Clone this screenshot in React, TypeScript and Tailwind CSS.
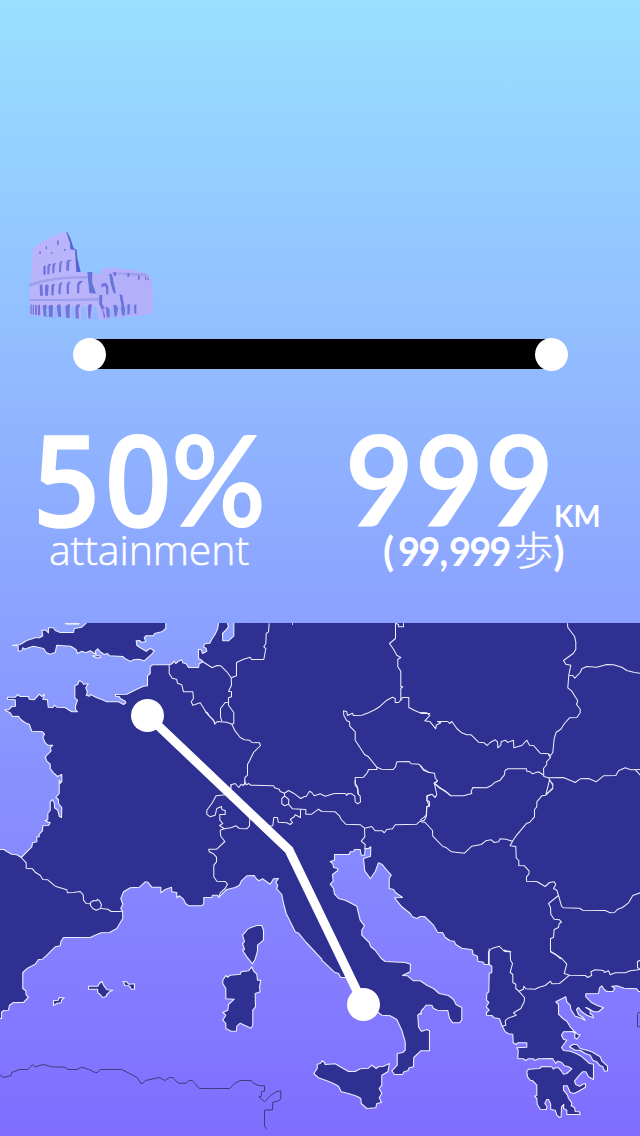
import React from "react";

type Tile = "A" | "B" | "C" | "D" | "E" | "F" | "G" | "H" | "I";
type Segment = [Tile, string];

// The map is stored as nine survey tiles, three units to the pixel.
const origins: Record<Tile, [number, number]> = {
  A: [0, 615], B: [205, 615], C: [420, 615],
  D: [0, 780], E: [205, 780], F: [420, 780],
  G: [0, 950], H: [205, 950], I: [420, 950],
};

const toPath = (segments: Segment[], closed = false) =>
  "M" +
  segments
    .flatMap(([tile, pts]) =>
      pts.trim().split(/\s+/).map((p) => {
        const [x, y] = p.split(",").map(Number);
        const [ox, oy] = origins[tile];
        return `${(ox + (x + 0.5) / 3).toFixed(1)} ${(oy + (y + 0.5) / 3).toFixed(1)}`;
      })
    )
    .join("L") +
  (closed ? "Z" : "");

const mainland: Segment[] = [
  ["B", "40,10 40,24 37,42 28,60 20,72 14,84 0,86"],
  ["A", "613,86 610,95 618,100 620,108 607,115 603,103 595,103 595,130 605,135 608,140 597,146 595,157 565,157 558,146 548,143 545,134 535,138 527,145 522,138 517,145 508,149 457,149 450,155 450,175 442,182 442,212 430,213 410,222 380,237 345,238 347,243 358,245 360,250 375,258 377,263 370,268 355,260 320,260 305,253 290,248 272,238 268,243 258,240 262,232 257,218 264,206 250,207 245,200 237,197 233,207 224,212 224,248 232,255 226,272 226,283 232,290 215,290 205,284 195,277 170,276 163,270 158,277 144,276 142,254 128,252 133,237 125,244 118,237 105,250 102,254 87,252 85,244 60,244 53,238 45,246 22,246 22,252 45,254 46,273 35,274 25,284 14,284 20,288 30,293 37,304 55,303 62,313 75,323 87,327 95,348 127,350 133,357 128,367 135,383 143,390 158,390 150,398 153,407 135,425 140,438 150,447 150,460 160,473 172,484 185,478 185,500 177,505"],
  ["D", "177,0 182,7 177,12 177,40 167,52 175,58 175,70 185,82 184,112 177,108 173,90 163,83 163,70 157,58 150,65 150,90 143,100 143,118 135,122 150,128 145,136 128,137 127,152 117,162 117,170 110,170 110,185 97,188 95,200 63,232 50,224 35,222 20,214 12,208 0,208 -15,208"],
  ["G", "-15,205 4,205 4,187 10,181 25,180 28,165 40,157 70,157 85,141 78,135 77,122 68,115 68,67 82,54 105,42 115,28 127,27 140,15 155,0"],
  ["D", "165,500 180,497 182,485 190,472 270,472 290,463 303,458 328,457 350,445 362,425 368,415 367,393 362,385 368,372 362,355 370,335 390,323 418,321 435,305 443,306 455,321 482,321 482,338 495,328 514,321 515,335 530,337 530,353 538,347 550,357 556,370 565,377 605,377 611,370 611,352 635,352 637,345"],
  ["E", "38,345 40,352 50,342 65,328 90,322 103,315 108,303 125,287 147,286 155,297 162,302 172,296 195,312 205,296 220,295 212,306 218,316 214,325 230,343 235,370 243,400 270,455 280,459 303,487 350,537"],
  ["H", "350,30 388,66 400,70 407,82 422,82 433,98 440,93 470,150 520,188 530,195 555,197 575,208 590,240 600,275 600,300 593,307 576,310 576,345 560,362 568,373 592,373 597,364 608,362 612,353 625,350 626,322 647,302"],
  ["I", "28,302 28,242 20,238 5,243"],
  ["H", "648,243 640,230 638,195 648,187"],
  ["I", "3,193 3,182 10,175 18,165 35,165 40,175 52,180 83,181 88,205 98,218 118,218 125,210 125,172 108,164 100,148 85,136 57,130 40,115 20,105 0,92"],
  ["H", "625,92 607,77 592,76 615,65 616,42 600,37 540,34 528,25 510,0"],
  ["E", "497,500 492,487 470,465 470,450 478,437 465,420 455,378 445,373 420,360 400,355 388,342 385,325 375,312 384,303 382,283 397,272 398,265 385,262 383,250 375,244 388,240 388,223 432,223 435,215 445,214 448,208 465,208 468,225 478,225 480,205 490,205 497,200 496,228 475,235 479,273 490,287 495,296 510,275 520,248 530,252 545,270 558,285 552,295 552,325 565,328 572,338 592,352 568,353 590,380 615,400 622,410 635,415"],
  ["F", "0,409 13,409 40,435 52,456 68,458 75,472 90,482 102,483 107,493 125,504 152,508"],
  ["I", "157,0 158,12 172,18 173,33 190,36 192,43 207,43 215,48 215,67 207,70 206,125 200,130 199,150 206,157 198,170 207,180 199,187 199,195 215,196 222,203 238,206 245,225 255,245 265,251 278,252 279,278 288,283 293,278 320,278 320,291 290,293 294,300 293,325 310,326 316,331 325,326 340,326 343,331 355,326 397,325 407,340 412,333 425,337 433,347 445,350 455,356 440,370 430,372 424,363 415,353 405,353 400,357 395,350 365,349 358,355 325,357 320,365 322,380 330,390 338,392 350,405 350,435 343,438 350,445 351,462 360,477 378,478 381,470 374,460 380,448 385,448 391,460 392,478 405,480 410,495 418,502 423,500 424,470 431,463 430,475 440,480 440,493 480,493 478,485 465,484 463,472 453,467 455,458 445,445 442,435 430,420 430,407 441,407 450,427 462,430 475,423 496,411 496,400 488,402 478,408 467,403 463,393 475,378 487,365 497,365 505,380 520,388 520,342 508,340 500,333 483,318 468,310 450,303 430,301 424,292 440,270 430,267 424,255 430,245 458,244 465,250 463,262 470,267 480,253 472,252 462,243 450,230 440,213 428,205 415,192 415,163 407,155 437,140 440,155 450,165 452,178 465,198 480,203 495,210 490,203 475,193 469,178 475,172 485,185 500,195 520,203 518,195 510,190 510,180 497,172 505,175 520,185 535,185 550,173 530,165 515,158 497,140 497,131 535,130 538,113 545,107 552,118 560,124 578,124 584,115 575,108 590,107 612,114 650,116 655,124 675,125"],
  ["C", "675,10"],
  ["B", "86,10 86,62 70,77 53,77 52,55 62,45 70,35 67,24 67,10"],
];

const islands: Segment[][] = [
  [["A", "258,10 497,10 497,40 485,50 463,55 460,62 437,62 432,68 437,78 425,82 418,76 408,77 410,90 420,98 438,108 450,99 462,107 455,117 432,137 415,132 400,134 392,139 375,131 368,124 328,122 322,115 312,118 300,110 293,101 285,108 288,118 270,107 257,113 245,108 232,115 228,104 212,93 170,90 165,112 150,117 138,112 130,100 100,93 85,98 75,102 68,98 65,107 54,108 54,92 37,91 60,88 80,76 105,68 118,68 128,62 125,45 137,45 145,53 145,38 160,38 165,46 180,52 220,52 222,40 245,36 258,24"]],
  [["A", "277,122 300,122 300,128 288,128"]],
  [["A", "195,24 237,24 235,27 198,27"]],
  [["E", "112,465 130,445 155,436 170,436 175,450 175,480 157,495 157,512 150,537"], ["H", "142,41 125,20 112,0"], ["E", "118,508 112,490 118,485"]],
  [["H", "140,50 145,62 155,72 157,90 167,90 163,110 165,125 150,130 151,170 143,180 143,225 137,234 118,225 105,219 95,228 94,243 78,243 62,235 62,220 53,210 62,195 53,187 68,180 70,163 87,147 62,146 62,115 53,100 53,90 62,76 67,81 75,75 105,72 108,65 130,62"]],
  [["H", "351,332 345,340 336,342 336,355 326,370 340,383 365,392 385,400 400,408 408,425 430,430 455,438 467,445 468,460 485,475 512,473 515,460 529,457 522,443 530,430 522,415 530,405 530,375 548,365 553,340 535,348 520,350 513,355 500,345 490,354 465,356 450,364 430,364 405,350 390,341 360,343 358,337"]],
  [["I", "448,290 458,283 470,283 480,295 500,300 515,305 540,320 545,332 562,348 562,362 553,363 548,350 538,345 530,335 518,330 510,315 495,310 480,300 465,300"]],
  [["G", "265,108 293,108 298,99 305,94 312,108 321,119 338,120 328,125 320,133 318,139 307,142 300,133 293,128 292,117 265,117"]],
  [["G", "369,94 380,95 386,102 403,101 403,117 394,117 387,107 374,106"]],
  [["G", "160,151 174,150 177,142 192,143 184,150 183,158 171,159 160,166"]],
];

const borders: Segment[][] = [
  // Low Countries
  [["A", "507,149 507,175 516,189 529,192 532,204 545,209 550,230 578,230 580,250 573,260 578,270 600,263 608,275 620,295 645,322"]],
  [["B", "0,290 7,293 13,303 25,315 29,327 36,319 65,321 80,327"]],
  [["A", "608,140 620,147 635,157"], ["B", "22,157 35,151 47,152 65,170 78,188 79,210 70,228 79,230 79,245 70,248 70,270 86,292 86,325 79,328"]],
  [["B", "78,188 94,182 94,142 115,132 135,126 139,133 176,133 182,100 176,95 182,85 183,55 190,50 192,24"]],
  [["B", "68,262 60,262 46,280 46,305 50,318"]],
  [["B", "80,327 90,348 105,367 118,374 133,375 140,382 163,383 166,391 145,412 134,435 127,448 127,480 119,488 119,510"]],
  // Germany, Poland and Czech lands
  [["B", "571,24 571,70 553,85 565,102 575,120 587,127 578,132 578,155 587,168 587,215 593,215 587,220 587,255 580,262 570,262 570,250 562,246 545,255 525,273 510,283 490,293 470,300 445,301 442,294 427,301 425,290 415,287 416,300 425,317 433,320 434,333 450,350 450,375 463,395 478,418 490,425 515,456 530,462 564,463 571,455 575,440 612,439 618,446 642,447 655,465 675,473"]],
  [["B", "571,24 580,28 580,35 595,35 595,24"]],
  [["B", "587,255 592,247 611,247 611,277 630,287 650,295 675,295"]],
  [["C", "0,292 20,293 29,301 14,317 30,320 47,341 48,330 62,323 52,319 83,319 88,325 95,319 110,340 125,353 140,359 153,359 175,381 192,383 201,391 210,382 225,374 232,380 233,398 242,390 243,379 257,375 262,382 280,375 281,398 305,391 320,375 328,390 340,391 360,414 385,416 391,427"]],
  [["C", "442,24 443,37 463,63 467,80 467,103 459,115 430,136 437,147 452,150 446,180 458,181 464,189 480,172 485,161 500,154 530,156 560,148 580,149 605,156 620,166 643,172 665,175"]],
  [["C", "446,180 443,218 455,228 473,257 469,267 480,282 480,293 470,307 448,308 433,325 422,342 408,351 402,370 398,412 392,420 385,418 391,427 379,440 380,448 370,460 371,484 385,488 430,487 465,502 480,491 505,490 528,500 550,482 587,481 595,467 615,458 632,464 660,463"]],
  [["C", "645,466 650,468 660,480"]],
  [["B", "515,456 515,463 490,463 487,472 475,486 450,487 450,510 458,520 460,540"]],
  [["C", "0,450 10,462 25,471 43,474 45,488 52,497 42,505 70,525 85,535"], ["F", "92,47 130,47 155,40 153,34 158,22 200,23 215,15 225,6 240,0"], ["C", "252,480 255,465 263,461 319,461 320,468 330,470 337,476 355,470 371,480"]],
  // Alps
  [["E", "77,12 77,28 78,14 90,10 101,22 108,12 114,16 120,8 125,14 130,10 137,15 206,17 208,23 222,27 225,34 238,39 250,31 268,41 287,55 298,49 303,49 313,33 320,37 327,47 345,41 360,48 387,40 420,40 425,46 428,40 440,41 449,48 450,65 458,71 466,65 465,48 458,40 457,20 450,10 450,0"]],
  [["E", "119,0 119,12"]],
  [["E", "238,39 238,48 230,55 230,70 238,77 250,72 251,58 242,50 238,48"]],
  [["E", "250,72 262,86 302,88 302,102 320,102 340,87 350,94 390,95 403,107 408,118 422,132 466,134 478,144 500,139 510,152 532,152 537,158 545,148 562,146 570,134 635,132 643,124 658,120 664,107 665,80 672,76 665,60 668,46 675,46"]],
  [["F", "0,120 12,111 18,105 20,80 28,78 28,65 20,60 20,47 35,42 45,52 50,43 45,20 42,8 50,5 51,0"]],
  [["F", "42,8 60,25 73,31 92,47"]],
  [["F", "0,124 15,127 37,151 38,168 68,199 76,201 94,215 133,219 155,198 183,193 197,182 213,179 222,187 235,185 240,176 257,177 277,183 270,197 287,199 288,233 296,241 296,256 313,257 327,273 326,282 319,290 319,303 350,304 375,319 388,307 402,305 407,313 400,325 410,330 415,346 424,378 430,383 478,384 488,390 555,391 570,398 583,397 593,387 607,382 625,368 638,346 660,338"]],
  [["F", "277,183 287,168 320,129 328,127 343,110 343,88 350,80 350,65 365,47 377,45 398,25 398,12 388,0"], ["C", "377,539 398,518 398,510 385,488"]],
  [["F", "415,346 385,370 391,382 392,402 402,417 418,419 424,426 417,430 415,442 402,448 400,472 391,475 391,515 408,524 422,537"]],
  [["I", "391,3 425,25 440,42 432,70 448,75 495,76 503,82 515,75 512,65 525,59 550,61 553,67 565,62 570,74 585,68 615,68 630,62 660,58"]],
  [["I", "448,75 418,100 395,101 391,93 375,106 355,112 345,117 317,116 311,108 310,117 296,123 287,115 287,102 278,97 278,73 270,67 277,40 271,30 270,4 252,0"], ["F", "272,515 253,514 237,498 215,505 205,515 205,553"]],
  [["I", "296,123 313,142 312,155 302,175 280,188 288,195 262,205 255,212 257,225 245,228"]],
  [["I", "207,-5 207,43"]],
  [["I", "660,30 652,34 652,52 660,58"]],
  // Western Alps and the Po
  [["E", "60,44 33,47 20,70 5,90 5,102 15,110 30,105 35,85 49,79 50,88 60,91 60,103 44,103 44,120 53,130 43,136 57,146 77,143 93,137 102,145 125,146 133,137 134,110"]],
  [["E", "57,146 45,150 47,168 59,184 35,207 11,207 12,215 25,221 34,231 34,245 26,255 26,290 35,303 60,304 67,312 60,325 45,338 42,348"]],
  [["E", "190,138 203,137 206,112 217,112 219,126 245,128 255,133 262,127 255,118 267,110 270,104 286,112 286,88"]],
  [["E", "478,144 479,170 468,183 480,193 479,208"]],
  // Pyrenees
  [["D", "63,232 78,248 78,264 97,266 105,276 120,285 128,298 143,299 165,318 200,329 202,338 220,337 240,334 249,344 250,360 258,370 271,371"]],
  [["D", "271,367 280,361 290,362 292,357 298,362 304,374 301,385 288,390 278,385 271,376 271,367"]],
  [["D", "303,385 323,387 333,394 357,394 367,393"]],
  [["B", "262,24 262,29"]],
];

const africa: Segment[][] = [
  [["G", "0,375 10,382 33,376 34,367 58,358 83,358 97,343 105,350 130,343 155,350 194,351 203,358 230,358 245,351 266,358 285,367 292,367 300,358 365,358 411,382 422,400 428,399 436,391 477,382 494,391 508,382 518,382 534,399 558,399 566,391 576,391 598,415 645,415"], ["H", "74,415 88,400 105,391 138,391 145,399 160,406 178,407 178,423 169,424 168,439 161,440 178,455 197,435 215,424 227,422 227,446 218,453 203,456 202,479 178,480 178,528 185,536"]],
  [["I", "665,187 655,187 652,192 652,230 665,230"]],
];

function Colosseum() {
  return (
    <svg viewBox="0 0 435 330" className="ml-5 h-[110px] w-[145px] shrink-0" aria-hidden="true">
      <path fill="#5265d2" d="M134 35l8 2 9 18 10 30 9 5 2 23 10 43-18 3z" />
      <path fill="#bab5fb" d="M138 34L110 43 70 62 46 79 38 91 33 180 29 195 30 286 62 288 216 298 244 299 240 225 225 222 205 158 169 156 165 90 151 88 150 70z" />
      <path fill="#b4aff9" d="M214 161h31v-16l40-1 61 7 37 11 12 12 4 46-1 59-40 8-70 5-44 8-14-80-12-10z" />
      <path fill="#9fa1ed" d="M274 157l102 3 13 11-14-1-97-8zM26 190q82-24 176-22v8q-100-3-174 24zM28 237h102l107-4v10H28z" />
      <path fill="#6674da" d="M268 161l8 4 9 49-5 4-8-28zM202 156h15l-1 30 12 35-20-2zM238 225h9l-1 26 9 14-9 2-8-14zM299 224l7 3 7 32-8-2z" />
      <path fill="#6674da" d="M268 161l7 2 8 34 5 24-5-1-10-32zM299 222l8 4 4 30-7-2z" />
      <g fill="#7074dc">
        <path d="M70 139l7-3v28h-7zM82 138q4-10 11-5l-4 8-1 22h-6zM97 135q4-9 11-5l-4 8-1 22h-6zM118 130q2-9 10-7l-4 9-1 25h-6zM139 128q2-12 17-8l-8 5-1 27h-8zM59 195l8-2 2 34H60zM75 197q5-6 11-2l-2 32h-9zM94 197q2-8 11-5l-3 8-1 26h-7zM116 197q2-11 12-10l-5 10-1 26h-7zM140 196q3-13 12-11l-5 9v28h-7zM171 195q3-15 18-12l-11 12v25h-7z" />
        <path d="M31 257l4-7v33h-4zM38 256l4-4v32h-4zM45 257l5-4 1 32h-6zM53 257l7-4 1 33h-7zM68 259q4-9 12-4l2 35-11-1zM85 260q6-10 14-3l-1 35-11-1zM110 258q6-9 12-3l2 37-10-2zM136 260q9-12 14-6l-1 41-11-2zM166 261q3-12 15-7l-6 13 2 29-10-2zM203 262q3-15 13-8l-5 43-6-2zM240 258l8 8 8 22-4 10-4-26zM257 258l12 10v24l-8 1zM280 255q12-4 14 12l-4 22-6 1zM302 260l8-4 6 9-2 21-7 1zM322 255q5-8 8 2l-1 26-7 1zM342 255l7-2v28h-6z" />
        <path d="M243 194q15-14 22 6v23h-7v-20q-4-10-12 0zM58 93h4v9h-4zM77 79h4v9h-4zM93 97h4v5h-4zM111 62l5-1v13h-5zM132 87h5v5h-5zM281 156h7v12h-7zM322 159h6v12h-6zM354 165l5 2v12h-5zM375 171h4v8h-4zM382 173h4v8h-4z" />
      </g>
      <g fill="#92b9ff">
        <path d="M78 266l7-4 1 28-7-1zM101 263l8-3 4 34-11-1zM127 260l7-4 2 37-8 1zM154 261l10-3v37h-11zM183 262q6-9 14 0l4 38h-17zM220 262q5-9 9-2l9 40-24-1zM271 262l7-4 4 37-10 1zM297 262l4-4 3 28-6 1zM315 262l5-4 1 28h-6zM335 259l5-4v28h-6z" />
      </g>
    </svg>
  );
}

function Progress() {
  return (
    <div className="mx-[73px] mt-2 flex h-[33px] w-[495px] shrink-0 items-start">
      <span className="z-10 size-[33px] shrink-0 rounded-full bg-white" />
      <span className="-mx-4 mt-px h-[30px] grow bg-black" />
      <span className="z-10 size-[33px] shrink-0 rounded-full bg-white" />
    </div>
  );
}

function Stats() {
  return (
    <div className="mt-[49px] grid h-[203px] shrink-0 grid-cols-2 font-['Lato',sans-serif] font-bold whitespace-nowrap text-white">
      <section className="flex flex-col">
        <div className="flex h-[107px] items-end pl-[33px] text-[126px] leading-[88px]">
          <div className="mb-1">
            <span className="mr-[-16px] inline-block origin-left scale-x-[0.93] font-['Open_Sans',sans-serif] font-semibold tracking-[5px] [-webkit-text-stroke:1.5px_white]">50</span>
            <span className="inline-block origin-left scale-x-[0.92]">%</span>
          </div>
        </div>
        <div className="pl-[49px] font-['Open_Sans',sans-serif] text-[41px] leading-[44px] font-light tracking-[-0.1px] [-webkit-text-stroke:0.5px_white]">
          attainment
        </div>
      </section>
      <section className="flex flex-col">
        <div className="flex h-[107px] items-end pl-[25px] text-[126px] leading-[88px]">
          <div className="-mb-1">
            <span className="mr-[-14px] inline-block origin-left scale-x-[0.94] tracking-[1.4px]">999</span>
            <span className="inline-block origin-left scale-x-[0.92] text-[31px] leading-none">KM</span>
          </div>
        </div>
        <div className="flex pl-[63px] text-[40px] leading-[48px]">
          <span className="w-[15px]">(</span>
          <span className="mr-[-6px] flex origin-left scale-x-[0.95]">
            <span className="tracking-[-2px]">99</span>
            <span className="mx-px">,</span>
            <span className="tracking-[-2px]">999</span>
          </span>
          <span className="-mt-[3px] ml-[4px] font-['Noto_Sans_CJK_JP',sans-serif] font-light [-webkit-text-stroke:0.3px_white]">歩</span>
          <span>)</span>
        </div>
      </section>
    </div>
  );
}

function RouteMap() {
  return (
    <svg viewBox="0 623 640 513" className="block h-[513px] w-[640px] shrink-0" aria-hidden="true">
      <g fill="#2e3192" stroke="#eeeefa" strokeWidth="1.1" strokeLinejoin="round">
        <path d={toPath(mainland, true)} />
        {islands.map((shape, i) => (
          <path key={i} d={toPath(shape, true)} />
        ))}
      </g>
      <g fill="none" stroke="#eeeefa" strokeWidth="1.05" strokeLinejoin="round">
        {borders.map((line, i) => (
          <path key={i} d={toPath(line)} />
        ))}
      </g>
      <g fill="none" stroke="#403b77" strokeWidth="1">
        {africa.map((line, i) => (
          <path key={i} d={toPath(line)} />
        ))}
      </g>
      <path d="M147.5 715.5L289 850L363.5 1004.5" fill="none" stroke="#fff" strokeWidth="9" />
      <circle cx="147.5" cy="715.5" r="16.5" fill="#fff" />
      <circle cx="363.5" cy="1004.5" r="16.5" fill="#fff" />
    </svg>
  );
}

export default function App() {
  return (
    <main className="flex h-[1136px] w-[640px] flex-col overflow-hidden bg-linear-to-b/srgb from-[#99e0ff] to-[#806dff] pt-[220px]">
      <Colosseum />
      <Progress />
      <Stats />
      <RouteMap />
    </main>
  );
}
